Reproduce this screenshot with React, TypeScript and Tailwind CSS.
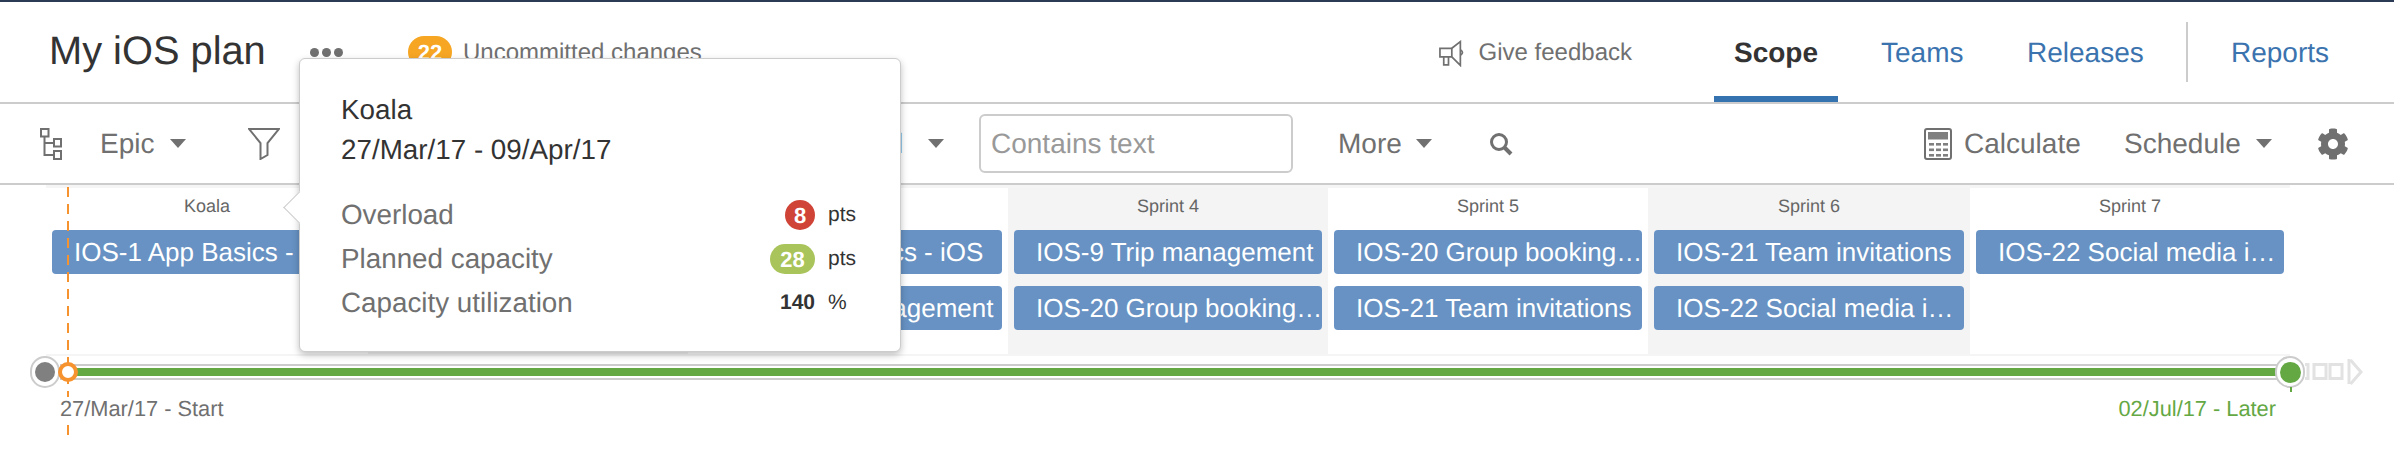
import { FaCog } from 'react-icons/fa'

// Sprint 2 and the Sprint 3 label sit behind the popover in this view
const sprints = [
  { id: 1, name: 'Koala', cards: ['IOS-1 App Basics - iOS'] },
  { id: 2, name: '', shaded: true, cards: [] },
  { id: 3, name: '', cards: ['IOS-2 App basics - iOS', 'IOS-8 Trip management'] },
  { id: 4, name: 'Sprint 4', shaded: true, cards: ['IOS-9 Trip management', 'IOS-20 Group booking…'] },
  { id: 5, name: 'Sprint 5', cards: ['IOS-20 Group booking…', 'IOS-21 Team invitations'] },
  { id: 6, name: 'Sprint 6', shaded: true, cards: ['IOS-21 Team invitations', 'IOS-22 Social media i…'] },
  { id: 7, name: 'Sprint 7', cards: ['IOS-22 Social media i…'] },
]

function Caret() {
  return (
    <svg width="16" height="9" viewBox="0 0 16 9" className="shrink-0">
      <path d="M0 0H16L8 9Z" fill="#707070" />
    </svg>
  )
}

function HierarchyIcon() {
  return (
    <svg width="22" height="32" viewBox="0 0 22 32" fill="none" stroke="#707070" strokeWidth="2">
      <rect x="1" y="1" width="7.5" height="7.5" />
      <rect x="14" y="11" width="7" height="7.5" />
      <rect x="14" y="23" width="7" height="8" />
      <path d="M4.5 8.5V27H14M4.5 15H14" />
    </svg>
  )
}

function FilterIcon() {
  return (
    <svg width="32" height="32" viewBox="0 0 32 32" fill="none" stroke="#707070" strokeWidth="2">
      <path d="M1 1H31L19.5 15V27L12.5 31V15Z" />
    </svg>
  )
}

function SearchIcon() {
  return (
    <svg width="24" height="24" viewBox="0 0 24 24" fill="none" stroke="#707070" className="shrink-0">
      <circle cx="10" cy="10" r="7.5" strokeWidth="3" />
      <path d="M15.5 15.5L22 22" strokeWidth="4" />
    </svg>
  )
}

function MegaphoneIcon() {
  return (
    <svg width="28" height="27" viewBox="0 0 28 27" fill="none" stroke="#707070" strokeWidth="1.8">
      <path d="M1 8H13.5V17H1Z" />
      <path d="M13.5 8L22.5 1V26L13.5 17" />
      <path d="M22.5 9.5Q27 12.5 22.5 15.5" />
      <path d="M5 17V25.5H10V17" />
    </svg>
  )
}

function CalculatorIcon() {
  const keys = [15, 20.5, 26]
  return (
    <svg width="28" height="32" viewBox="0 0 28 32" fill="none">
      <rect x="1" y="1" width="26" height="30" rx="2" stroke="#707070" strokeWidth="2" />
      <rect x="4" y="4" width="20" height="7.5" fill="#808080" />
      {keys.map((y) => (
        <g key={y} fill="#808080">
          <rect x="5" y={y} width="5" height="2.6" />
          <rect x="12" y={y} width="5" height="2.6" />
          <rect x="19" y={y} width="5" height="2.6" />
        </g>
      ))}
    </svg>
  )
}

function TimelineEnd() {
  return (
    <svg width="60" height="26" viewBox="0 0 60 26" fill="none" stroke="#e2e2e2" strokeWidth="3" className="ml-[25px] shrink-0">
      <path d="M0 5.5H3V19.5H0" />
      <rect x="9" y="5.5" width="12" height="14" />
      <rect x="25" y="5.5" width="12" height="14" />
      <path d="M44 0V25" />
      <path d="M45.5 1L56 13L45.5 25" />
    </svg>
  )
}

function PopoverRow({ label, value, unit }: { label: string; value: React.ReactNode; unit: string }) {
  return (
    <div className="flex h-[44px] items-center">
      <span className="text-[27.8px] text-[#707070]">{label}</span>
      <div className="ml-auto flex items-center">
        {value}
        <span className="ml-[13px] w-[28px] text-[21px] text-[#333]">{unit}</span>
      </div>
    </div>
  )
}

export default function App() {
  return (
    <div className="relative h-[464px] w-[2394px] overflow-hidden bg-white font-['Liberation_Sans',Arial,sans-serif] [text-rendering:geometricPrecision]">
      <div className="h-[2px] bg-[#2c3b55]" />

      {/* Header */}
      <header className="flex h-[102px] items-center border-b-2 border-[#ccc] pl-[49px]">
        <h1 className="w-[215px] whitespace-nowrap text-[39.8px] leading-none text-[#333]">My iOS plan</h1>
        <div className="ml-[46px] flex w-[33px] gap-[3px]">
          <span className="h-[9px] w-[9px] rounded-full bg-[#707070]" />
          <span className="h-[9px] w-[9px] rounded-full bg-[#707070]" />
          <span className="h-[9px] w-[9px] rounded-full bg-[#707070]" />
        </div>
        <span className="ml-[65px] flex h-[32px] w-[44px] items-center justify-center rounded-full bg-[#f6a623] text-[22px] font-bold text-white">22</span>
        <span className="ml-[11px] w-[237px] whitespace-nowrap pt-[2px] text-[24px] text-[#707070]">Uncommitted changes</span>

        <div className="ml-[739px] flex w-[193px] items-center pt-[2px]">
          <MegaphoneIcon />
          <span className="ml-[13px] whitespace-nowrap text-[24px] text-[#707070]">Give feedback</span>
        </div>

        <nav className="ml-[82px] flex h-full items-center text-[28px]">
          <a className="flex h-full w-[124px] items-center justify-center border-b-[6px] border-[#3572b0] pt-[7px] font-bold text-[#333]">Scope</a>
          <a className="ml-[43px] w-[81px] pt-[1px] text-[#3b73af]">Teams</a>
          <a className="ml-[65px] w-[116px] pt-[1px] text-[#3b73af]">Releases</a>
          <span className="ml-[43px] h-[60px] w-[2px] bg-[#ccc]" />
          <a className="ml-[43px] pt-[1px] text-[#3b73af]">Reports</a>
        </nav>
      </header>

      {/* Toolbar */}
      <div className="flex h-[81px] items-center border-b-2 border-[#ccc] pl-[40px] text-[28px] text-[#707070]">
        <HierarchyIcon />
        <span className="ml-[38px] w-[55px]">Epic</span>
        <span className="ml-[15px]"><Caret /></span>
        <span className="ml-[62px]"><FilterIcon /></span>
        <span className="ml-[592px] w-[31px]">All</span>
        <span className="ml-[25px]"><Caret /></span>
        <div className="ml-[35px] flex h-[59px] w-[314px] items-center rounded-[6px] border-2 border-[#ccc] pl-[10px] text-[#999]">Contains text</div>
        <span className="ml-[45px] w-[62px]">More</span>
        <span className="ml-[16px]"><Caret /></span>
        <span className="ml-[57px]"><SearchIcon /></span>
        <span className="ml-[411px]"><CalculatorIcon /></span>
        <span className="ml-[12px] w-[115px]">Calculate</span>
        <span className="ml-[45px] w-[116px]">Schedule</span>
        <span className="ml-[16px]"><Caret /></span>
        <FaCog className="ml-[45px] text-[32px]" />
      </div>

      {/* Sprint columns */}
      <div className="ml-[46px] w-[2244px] border-t-[3px] border-b-2 border-[#f5f5f5]">
        <div className="grid h-[166px] grid-cols-[322px_repeat(4,320px)_322px_320px]">
          {sprints.map((sprint) => (
            <div key={sprint.id} className={sprint.shaded ? 'min-w-0 bg-[#f4f4f4] px-[6px]' : 'min-w-0 px-[6px]'}>
              <div className="flex h-[36px] items-center justify-center text-[18px] text-[#666]">{sprint.name}</div>
              <div className="mt-[6px] flex flex-col gap-[12px]">
                {sprint.cards.map((card) => (
                  <div key={card} className="h-[44px] overflow-hidden whitespace-nowrap rounded-[4px] bg-[#6792c3] pl-[22px] text-[26px] leading-[44px] text-white">{card}</div>
                ))}
              </div>
            </div>
          ))}
        </div>
      </div>

      {/* Timeline */}
      <div className="mt-[4px] flex h-[24px] items-center pl-[60px]">
        <div className="h-[16px] w-[2220px] border-y-2 border-[#ccc] py-[2px]">
          <div className="h-[8px] bg-[#64a844]" />
        </div>
        <TimelineEnd />
      </div>
      <div className="relative z-10 mt-[13px] flex w-[2276px] justify-between pl-[60px] text-[21.8px] leading-[24px]">
        <span className="bg-white text-[#707070]">27/Mar/17 - Start</span>
        <span className="text-[#64a844]">02/Jul/17 - Later</span>
      </div>

      {/* Today marker */}
      <div className="absolute left-[67px] top-[187px] h-[249px] w-[2px] bg-[repeating-linear-gradient(to_bottom,#f7932e_0,#f7932e_10px,transparent_10px,transparent_17px)]" />

      {/* Timeline knobs */}
      <div className="absolute left-[30px] top-[356px] flex h-[32px] w-[30px] items-center justify-center rounded-full border-2 border-[#ccc] bg-white">
        <div className="h-[20px] w-[20px] rounded-full bg-[#808080]" />
      </div>
      <div className="absolute left-[58px] top-[362px] h-[20px] w-[20px] rounded-full border-4 border-[#f7932e] bg-white" />
      <div className="absolute left-[2275px] top-[356px] flex h-[32px] w-[30px] items-center justify-center rounded-full border-2 border-[#ccc] bg-white">
        <div className="h-[21px] w-[21px] rounded-full bg-[#64a844]" />
      </div>
      <div className="absolute left-[2290px] top-[387px] h-[5px] w-[2px] bg-[#64a844]" />

      {/* Sprint details popover */}
      <div className="absolute left-[299px] top-[58px] z-20 h-[294px] w-[602px] rounded-[6px] border border-[#ccc] bg-white pl-[41px] pr-[44px] pt-[31px] shadow-[0_3px_7px_rgba(0,0,0,0.25)]">
        <div className="absolute left-[-12px] top-[137px] h-[23px] w-[23px] rotate-45 border-b border-l border-[#ccc] bg-white" />
        <div className="relative text-[27.8px] leading-[40px] text-[#333]">
          <div>Koala</div>
          <div>27/Mar/17 - 09/Apr/17</div>
        </div>
        <div className="relative mt-[23px]">
          <PopoverRow
            label="Overload"
            unit="pts"
            value={<span className="flex h-[30px] w-[30px] items-center justify-center rounded-full bg-[#d04437] text-[22px] font-bold text-white">8</span>}
          />
          <PopoverRow
            label="Planned capacity"
            unit="pts"
            value={<span className="flex h-[30px] w-[45px] items-center justify-center rounded-full bg-[#a9c45a] text-[22px] font-bold text-white">28</span>}
          />
          <PopoverRow
            label="Capacity utilization"
            unit="%"
            value={<span className="text-[21px] font-bold text-[#333]">140</span>}
          />
        </div>
      </div>
    </div>
  )
}
